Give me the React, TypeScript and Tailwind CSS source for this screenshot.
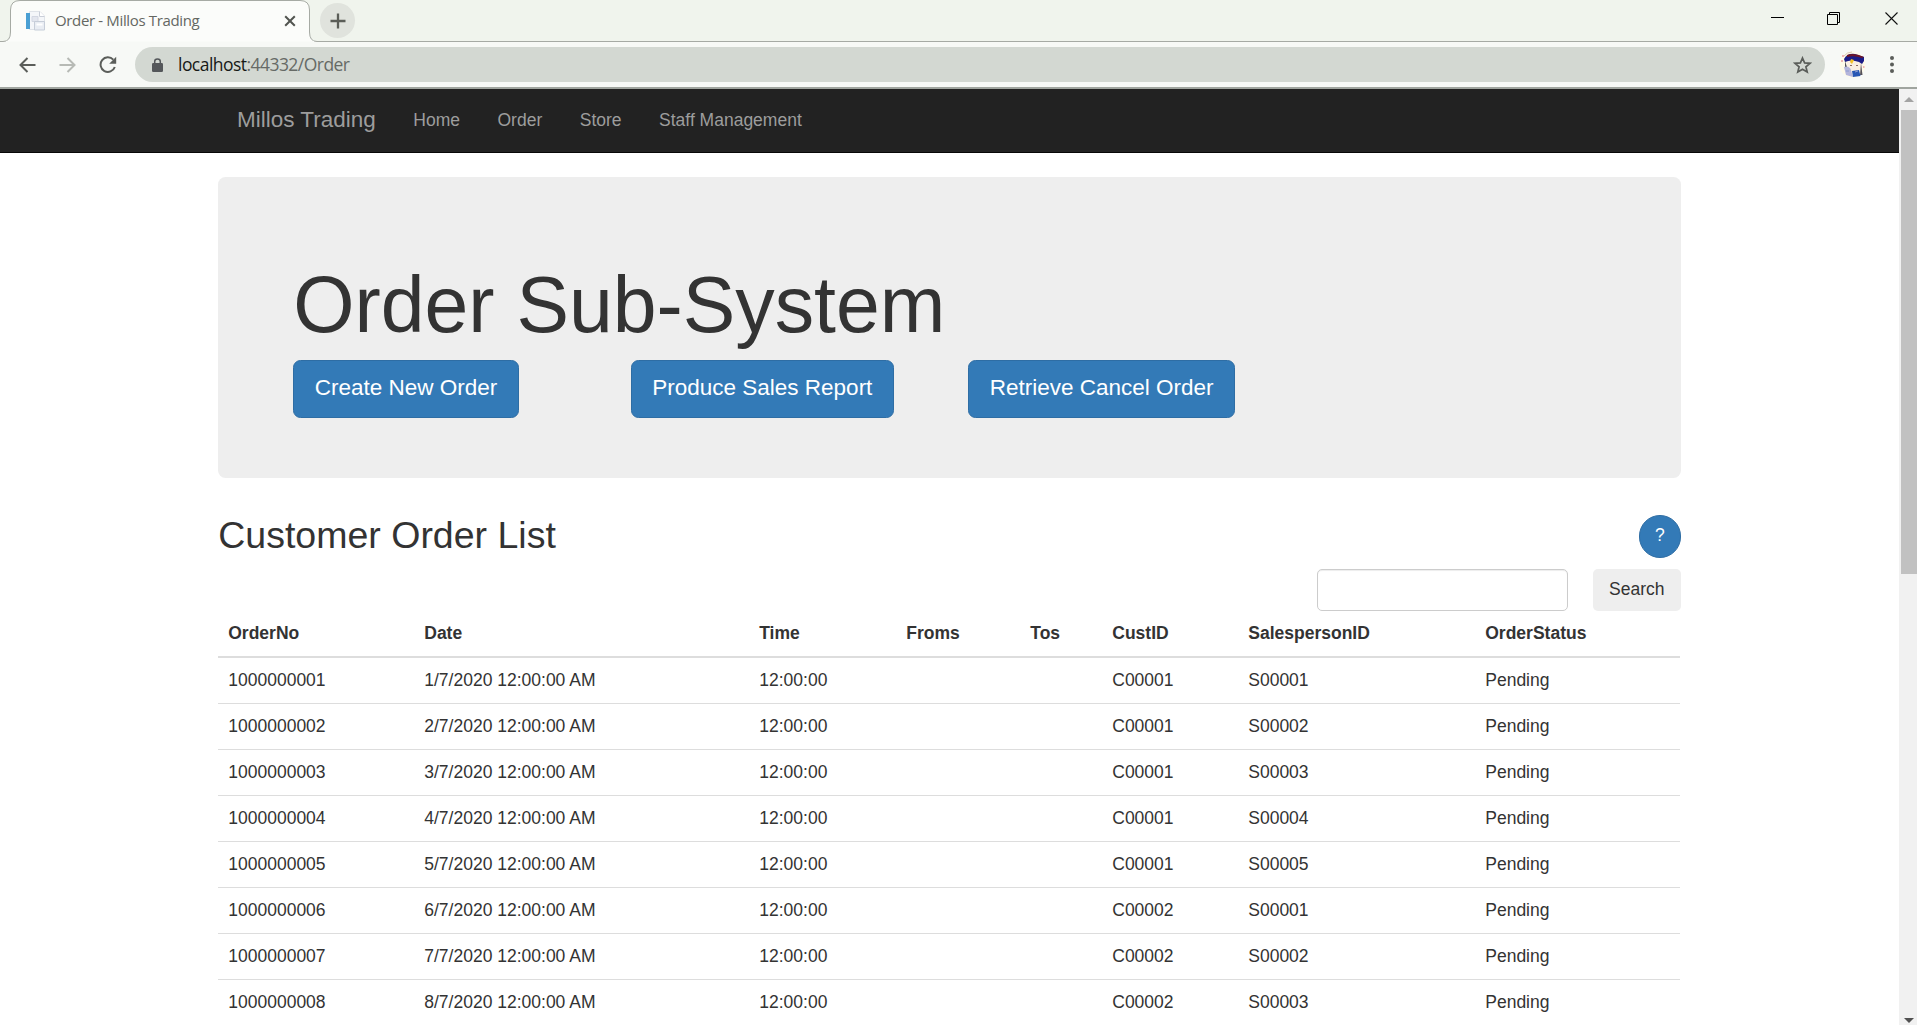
import React from "react";

const columns = [
  { label: "OrderNo", width: "w-[196px]" },
  { label: "Date", width: "w-[335px]" },
  { label: "Time", width: "w-[147px]" },
  { label: "Froms", width: "w-[124px]" },
  { label: "Tos", width: "w-[82px]" },
  { label: "CustID", width: "w-[136px]" },
  { label: "SalespersonID", width: "w-[237px]" },
  { label: "OrderStatus", width: "w-[205px]" },
];

const orders = [
  ["1000000001", "1/7/2020", "C00001", "S00001"],
  ["1000000002", "2/7/2020", "C00001", "S00002"],
  ["1000000003", "3/7/2020", "C00001", "S00003"],
  ["1000000004", "4/7/2020", "C00001", "S00004"],
  ["1000000005", "5/7/2020", "C00001", "S00005"],
  ["1000000006", "6/7/2020", "C00002", "S00001"],
  ["1000000007", "7/7/2020", "C00002", "S00002"],
  ["1000000008", "8/7/2020", "C00002", "S00003"],
];

function TabStrip() {
  return (
    <div className="relative flex h-[42px] shrink-0 bg-[#f0f4ed]">
      <div className="absolute inset-x-0 bottom-0 h-px bg-[#a6aaa4]" />
      <svg className="absolute left-0 top-0" width="322" height="42" viewBox="0 0 322 42">
        <path d="M0 42V41.5H3Q10.5 41.5 10.5 32V10Q10.5 .5 20 .5H300Q309.500 .5 309.500 10V32Q309.500 41.500 317 41.500H322V42Z" fill="#fbfcfa" />
        <path d="M0 41.500H3Q10.500 41.500 10.500 32V10Q10.500 .5 20 .5H300Q309.500 .5 309.500 10V32Q309.500 41.500 317 41.500H322" fill="none" stroke="#a6aaa4" />
        <path d="M6 41.500H314" stroke="#f9fbf8" />
      </svg>
      <div className="relative flex h-[41px] w-[310px] items-center pl-[26px]">
        <svg width="20" height="20" viewBox="0 0 20 20">
          <path d="M3.500 .5H14L18.500 5V18.500H3.500Z" fill="#f4f6f9" stroke="#dfe3e8" />
          <path d="M13.500 .5V5.500H18.500" fill="#fff" stroke="#c9ced8" />
          <path d="M0 2H4V18H0Z" fill="#4a9fd3" />
          <path d="M6 5.500H12V10.500H6Z" fill="#e3e6ee" stroke="#d3d7e2" />
          <path d="M8.500 10.500H18.500V19H8.500Z" fill="#e9edf3" stroke="#c6cdd8" />
          <path d="M10.500 13.500H16.500" stroke="#fff" strokeWidth="2" />
        </svg>
        <span className="ml-[9px] whitespace-nowrap font-['Open_Sans',sans-serif] text-[15px] tracking-[-0.350px] text-[#646762]">Order - Millos Trading</span>
        <svg className="absolute left-[284px] top-[15px]" width="12" height="12" viewBox="0 0 12 12">
          <path d="M1.200 1.200L10.800 10.800M10.800 1.200L1.200 10.800" stroke="#51544f" strokeWidth="2" />
        </svg>
      </div>
      <div className="relative ml-[10px] mt-[3px] flex size-[35px] items-center justify-center rounded-full bg-[#e0e3dd]">
        <svg width="16" height="16" viewBox="0 0 16 16">
          <path d="M8 .5V15.500M.5 8H15.500" stroke="#5b5e58" strokeWidth="2.300" />
        </svg>
      </div>
      <svg className="ml-auto mr-[18px] mt-[12px]" width="128" height="13" viewBox="0 0 128 13">
        <path d="M0 5.500H13" stroke="#000" />
        <path d="M56.500 2.500H66.500V12.500H56.500ZM58.500 2.500V.5H68.500V10.500H66.500" fill="none" stroke="#000" />
        <path d="M114.500 .5L126.500 12.500M126.500 .5L114.500 12.500" stroke="#111" strokeWidth="1.100" />
      </svg>
    </div>
  );
}

function Avatar() {
  return (
    <svg className="ml-[14px]" width="27" height="27" viewBox="0 0 27 27">
      <circle cx="13.500" cy="13.500" r="13" fill="#fffbe9" />
      <path d="M5 5Q8 1 13 1" fill="none" stroke="#d9c9b6" />
      <path d="M7 9Q14 5 24 11L23 18Q18 22 9 18Z" fill="#fbeee2" />
      <path d="M5 8Q8 2 16 3L25 6V10L23 13L20 11Q12 8 6 11Z" fill="#1a1c88" />
      <path d="M8 4Q15 1 25 6L23 7Q15 4 8 6Z" fill="#6e1527" />
      <path d="M12 8L15 9L13 13L11 11Z" fill="#f4bf25" />
      <path d="M6 10L8 16L6 17ZM22 12L23.500 24L21 24Z" fill="#55525a" />
      <path d="M5 16Q10 14 12 19L14 26L7 24Z" fill="#b4b5db" />
      <path d="M13 20L20 19L21.500 25L14 26Z" fill="#2657b4" />
      <path d="M11 14.500H13M17 14.500H19" stroke="#8d6a62" />
      <path d="M2 10H4M3 5H5M24 16H25.500" stroke="#ec9f9f" strokeWidth="1.400" />
      <path d="M7 20H10M16 21L19 20" stroke="#8b9cd0" />
    </svg>
  );
}

function Toolbar() {
  return (
    <div className="flex h-[47px] shrink-0 items-center border-b-2 border-[#a0a59f] bg-[#f7f9f6] pl-[19px] pr-[23px]">
      <svg width="17" height="16" viewBox="0 0 17 16">
        <path d="M16.500 8H1.500M8.500 1L1.500 8L8.500 15" fill="none" stroke="#5b5e5a" strokeWidth="2" />
      </svg>
      <svg className="ml-[23px]" width="17" height="16" viewBox="0 0 17 16">
        <path d="M.5 8H15.500M8.500 1L15.500 8L8.500 15" fill="none" stroke="#b7bab5" strokeWidth="2" />
      </svg>
      <svg className="ml-[23px]" width="18" height="18" viewBox="0 0 18 18">
        <path d="M14.300 3.700A7.300 7.300 0 1 0 15.800 11" fill="none" stroke="#5b5e5a" strokeWidth="2" />
        <path d="M17.200 .8V7.800H10.200Z" fill="#5b5e5a" />
      </svg>
      <div className="ml-[18px] flex h-[35px] flex-1 items-center rounded-full bg-[#d3d8d2] pl-[17px] pr-[13px]">
        <svg width="11" height="14" viewBox="0 0 11 14">
          <rect y="5" width="11" height="9" rx="1.300" fill="#54575a" />
          <path d="M2.700 6V3.500Q2.700 1 5.500 1T8.300 3.500V6" fill="none" stroke="#54575a" strokeWidth="1.500" />
        </svg>
        <span className="ml-[15px] whitespace-nowrap font-['Open_Sans',sans-serif] text-[17.500px] tracking-[-0.540px] text-[#666a66]"><span className="text-[#171917]">localhost</span>:44332/Order</span>
        <svg className="ml-auto" width="19" height="18" viewBox="0 0 19 18">
          <path d="M9.500 2L11.600 6.900L17 7.300L12.900 10.800L14.200 16L9.500 13.200L4.800 16L6.100 10.800L2 7.300L7.400 6.900Z" fill="none" stroke="#5a5d59" strokeWidth="1.700" />
        </svg>
      </div>
      <Avatar />
      <svg className="ml-[24px]" width="4" height="17" viewBox="0 0 4 17">
        <g fill="#5b5e5a"><circle cx="2" cy="2" r="2" /><circle cx="2" cy="8.500" r="2" /><circle cx="2" cy="15" r="2" /></g>
      </svg>
    </div>
  );
}

function Navbar() {
  return (
    <nav className="h-16 border-b border-[#080808] bg-[#222]">
      <div className="mx-auto flex h-[63px] w-[1462.500px] items-center text-[17.500px] text-[#9d9d9d]">
        <a className="px-[18.750px] pb-[2px] text-[22.500px]">Millos Trading</a>
        <a className="px-[18.750px]">Home</a>
        <a className="px-[18.750px]">Order</a>
        <a className="px-[18.750px]">Store</a>
        <a className="px-[18.750px]">Staff Management</a>
      </div>
    </nav>
  );
}

const primary = "flex h-[57.500px] items-center rounded-[7.500px] border border-[#2e6da4] bg-[#337ab7] px-[20.500px] pb-[2px] text-[22.500px] text-white whitespace-nowrap";

export default function App() {
  return (
    <div className="flex h-[1025px] w-[1917px] flex-col overflow-hidden bg-white font-['Liberation_Sans',Arial,sans-serif] text-[17.500px] leading-[25px] text-[#333]">
      <TabStrip />
      <Toolbar />
      <div className="flex min-h-0 flex-1">
        <div className="w-[1899px] overflow-hidden">
          <Navbar />
          <main className="mx-auto w-[1462.500px]">
            <section className="mt-6 h-[301px] rounded-[7.500px] bg-[#eee] pl-[75px] pt-[85px]">
              <h1 className="text-[78.750px] leading-[86px]">Order Sub-System</h1>
              <div className="mt-3 grid grid-cols-[337.500px_337.500px_337.500px] justify-items-start">
                <button className={primary}>Create New Order</button>
                <button className={primary}>Produce Sales Report</button>
                <button className={primary}>Retrieve Cancel Order</button>
              </div>
            </section>
            <div className="mt-[37px] flex h-[43px] items-center justify-between">
              <h2 className="pb-[3px] text-[37.500px] leading-[41px]">Customer Order List</h2>
              <button className="flex h-[43px] w-[42px] items-center justify-center rounded-full border border-[#2e6da4] bg-[#337ab7] pb-[2px] text-white">?</button>
            </div>
            <div className="mt-[11px] flex h-[42px] justify-end gap-[25px]">
              <input className="w-[251px] rounded-[5px] border border-[#ccc] bg-white px-[15px] shadow-[inset_0_1px_1px_rgba(0,0,0,0.075)]" />
              <button className="w-[88px] rounded-[5px] bg-[#eee] pb-[2px]">Search</button>
            </div>
            <table className="w-[1462px] table-fixed border-separate border-spacing-0">
              <thead>
                <tr>
                  {columns.map((c) => (
                    <th key={c.label} className={`${c.width} h-[47px] border-b-2 border-[#ddd] px-[10px] pb-px text-left align-middle font-bold`}>{c.label}</th>
                  ))}
                </tr>
              </thead>
              <tbody>
                {orders.map(([no, date, cust, sales]) => (
                  <tr key={no}>
                    {[no, `${date} 12:00:00 AM`, "12:00:00", "", "", cust, sales, "Pending"].map((v, i) => (
                      <td key={i} className="h-[46px] border-b border-[#ddd] px-[10px] pb-px">{v}</td>
                    ))}
                  </tr>
                ))}
              </tbody>
            </table>
          </main>
        </div>
        <div className="flex w-[18px] flex-col items-end bg-[#f1f1f1]">
          <div className="flex h-[21px] w-4 shrink-0 items-center justify-center">
            <svg width="10" height="5" viewBox="0 0 10 5"><path d="M0 5L5 0L10 5Z" fill="#a3a3a3" /></svg>
          </div>
          <div className="h-[464px] w-4 bg-[#c1c1c1]" />
          <div className="mb-[2px] mt-auto flex w-4 justify-center">
            <svg width="10" height="5" viewBox="0 0 10 5"><path d="M0 0L5 5L10 0Z" fill="#505050" /></svg>
          </div>
        </div>
      </div>
    </div>
  );
}
